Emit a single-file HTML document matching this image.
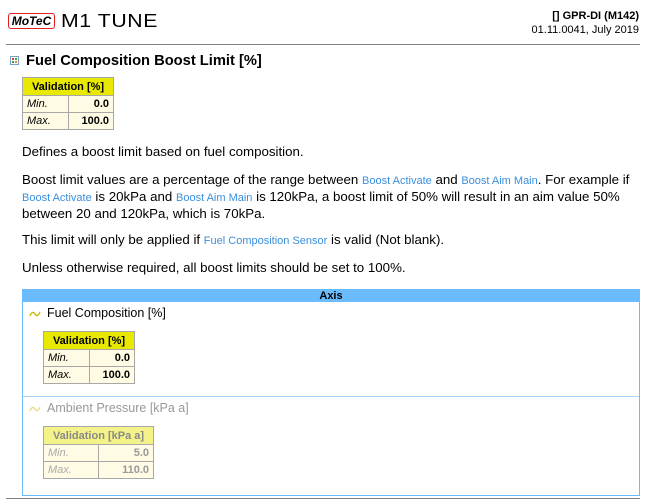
<!DOCTYPE html>
<html><head><meta charset="utf-8"><style>
*{margin:0;padding:0;box-sizing:border-box}
body{width:646px;height:500px;background:#fff;font-family:"Liberation Sans",Arial,sans-serif;color:#000;position:relative;overflow:hidden}
.a{position:absolute;white-space:nowrap}
p{position:absolute;left:22px;font-size:13.3px;line-height:16px;white-space:nowrap}
.l{color:#3a8fdc;font-size:11px}
table{position:absolute;border-collapse:collapse;font-size:11px}
td{border:1px solid #a8a8a8;height:17px;padding:0 4px;background:#fffbe4}
th{border:1px solid #a8a8a8;background:#e8e800;height:18px;font-weight:bold;font-size:11px;padding:0 4px}
td.k{font-style:italic;width:46px}
td.v{text-align:right;font-weight:bold}
.g th{background:#f4f38a;color:#888}
.g td{color:#999}
.g td.k{color:#aaa}
</style></head><body>
<div class="a" style="left:8px;top:13px;width:47px;height:16px;border:1px solid #e02020;border-radius:3px;font:italic bold 12px 'Liberation Sans',sans-serif;line-height:14px;text-align:center">MoTeC</div>
<div class="a" style="left:61px;top:11px;font-size:18px;letter-spacing:0.5px;line-height:20px;transform:scaleX(1.18);transform-origin:left">M1 TUNE</div>
<div class="a" style="right:7px;top:10px;font-size:11px;font-weight:bold;text-align:right">[] GPR-DI (M142)</div>
<div class="a" style="right:7px;top:24px;font-size:11px;text-align:right">01.11.0041, July 2019</div>
<div class="a" style="left:6px;top:44px;width:634px;height:1px;background:#808080"></div>
<svg class="a" style="left:10px;top:56px" width="9" height="9"><rect x="0.5" y="0.5" width="8" height="8" fill="#fff" stroke="#7aa0c8"/><rect x="2" y="2" width="2" height="2" fill="#d33"/><rect x="5" y="2" width="2" height="2" fill="#3a3"/><rect x="2" y="5" width="2" height="2" fill="#3a3"/><rect x="5" y="5" width="2" height="2" fill="#d83"/></svg>
<div class="a" style="left:26px;top:52px;font-size:14.7px;font-weight:bold;line-height:18px">Fuel Composition Boost Limit [%]</div>
<table style="left:22px;top:77px;width:92px"><tr><th colspan="2">Validation [%]</th></tr><tr><td class="k">Min.</td><td class="v">0.0</td></tr><tr><td class="k">Max.</td><td class="v">100.0</td></tr></table>
<p style="top:144px">Defines a boost limit based on fuel composition.</p>
<p style="top:172px">Boost limit values are a percentage of the range between <span class="l">Boost Activate</span> and <span class="l">Boost Aim Main</span>. For example if<br><span class="l">Boost Activate</span> is 20kPa and <span class="l">Boost Aim Main</span> is 120kPa, a boost limit of 50% will result in an aim value 50%<br>between 20 and 120kPa, which is 70kPa.</p>
<p style="top:232px">This limit will only be applied if <span class="l">Fuel Composition Sensor</span> is valid (Not blank).</p>
<p style="top:260px">Unless otherwise required, all boost limits should be set to 100%.</p>
<div class="a" style="left:22px;top:289px;width:618px;height:207px;border:1px solid #6bbcff"></div>
<div class="a" style="left:22px;top:289px;width:618px;height:13px;background:#6bbcff;font-size:11px;font-weight:bold;text-align:center;line-height:14px">Axis</div>
<div class="a" style="left:23px;top:396px;width:616px;height:1px;background:#a8d4fa"></div>
<svg class="a" style="left:29px;top:310px" width="12" height="8"><path d="M1 6 Q3.5 0 6 4 Q8.5 8 11 2" fill="none" stroke="#c8b400" stroke-width="1.3"/></svg>
<div class="a" style="left:47px;top:306px;font-size:12.5px">Fuel Composition [%]</div>
<table style="left:43px;top:331px;width:92px"><tr><th colspan="2">Validation [%]</th></tr><tr><td class="k">Min.</td><td class="v">0.0</td></tr><tr><td class="k">Max.</td><td class="v">100.0</td></tr></table>
<svg class="a" style="left:29px;top:405px" width="12" height="8"><path d="M1 6 Q3.5 0 6 4 Q8.5 8 11 2" fill="none" stroke="#e6dc80" stroke-width="1.3"/></svg>
<div class="a" style="left:47px;top:401px;font-size:12.5px;color:#999">Ambient Pressure [kPa a]</div>
<table class="g" style="left:43px;top:426px;width:111px"><tr><th colspan="2">Validation [kPa a]</th></tr><tr><td class="k" style="width:55px">Min.</td><td class="v">5.0</td></tr><tr><td class="k">Max.</td><td class="v">110.0</td></tr></table>
<div class="a" style="left:6px;top:498px;width:634px;height:1px;background:#808080"></div>
</body></html>
